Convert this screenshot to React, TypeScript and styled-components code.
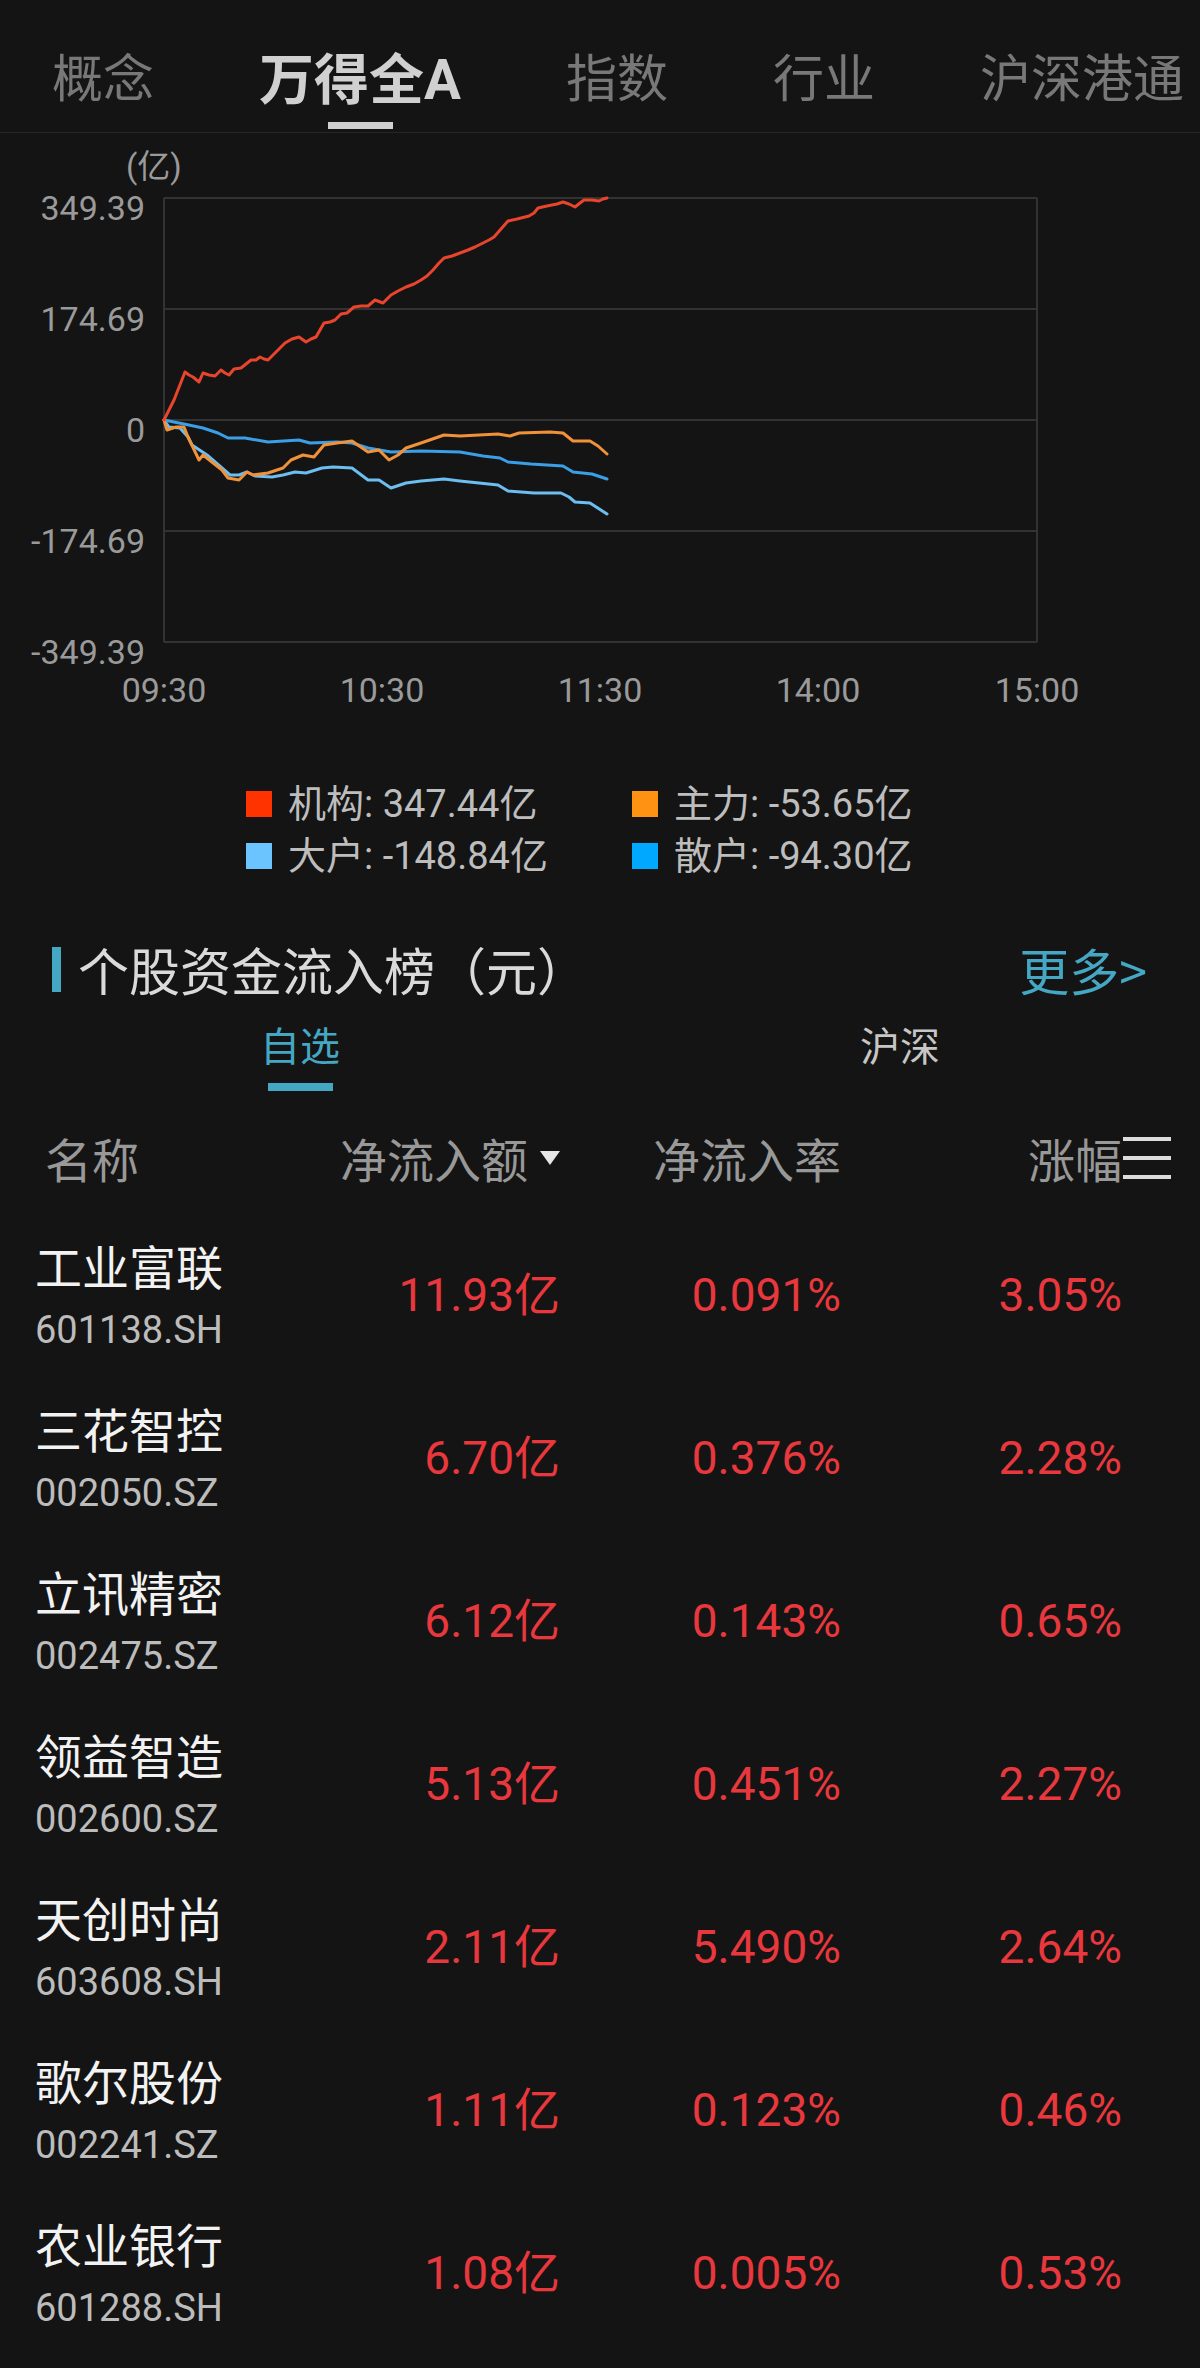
import React from "react";
import styled, { createGlobalStyle } from "styled-components";

const GlobalStyle = createGlobalStyle`
  html, body {
    margin: 0;
    padding: 0;
    background: #141414;
  }
  body {
    font-family: Roboto, "Noto Sans CJK SC", sans-serif;
  }
  * { box-sizing: border-box; }
`;

const TEAL = "#44a7c4";
const RED = "#e8383d";
const CJK = `"Noto Sans CJK SC", sans-serif`;
const NUM = `Roboto, "Noto Sans CJK SC", sans-serif`;

const Page = styled.div`
  width: 1200px;
  min-height: 2368px;
  background: #141414;
  overflow: hidden;
`;

/* ---------- top tabs ---------- */
const TabBar = styled.nav`
  display: flex;
  align-items: flex-start;
  gap: 105px;
  height: 133px;
  padding: 50px 0 0 52px;
  border-bottom: 1px solid #262626;
  white-space: nowrap;
  overflow: hidden;
`;

const Tab = styled.div<{ $active?: boolean }>`
  display: flex;
  flex-direction: column;
  align-items: center;
  font-family: ${NUM};
  font-size: ${(p) => (p.$active ? 55 : 51)}px;
  font-weight: ${(p) => (p.$active ? 700 : 400)};
  line-height: 60px;
  color: ${(p) => (p.$active ? "#d0d0d0" : "#787878")};
`;

const TabUnderline = styled.span`
  width: 65px;
  height: 7px;
  margin-top: 12px;
  background: #cfcfcf;
`;

/* ---------- chart ---------- */
const ChartBox = styled.section`
  height: 607px;
`;

const ChartSvg = styled.svg`
  display: block;
  width: 1200px;
  height: 607px;
`;

/* ---------- legend ---------- */
const Legend = styled.div`
  display: grid;
  grid-template-columns: 386px auto;
  grid-auto-rows: 52px;
  margin: 38px 0 0 246px;
`;

const LegendItem = styled.div`
  display: flex;
  align-items: center;
  gap: 16px;
  font-family: ${NUM};
  font-size: 38px;
  line-height: 52px;
  color: #bdbdbd;
  white-space: nowrap;
`;

const Swatch = styled.span<{ $color: string }>`
  flex: none;
  width: 26px;
  height: 26px;
  background: ${(p) => p.$color};
`;

/* ---------- section header ---------- */
const SectionHeader = styled.div`
  display: flex;
  align-items: center;
  justify-content: space-between;
  height: 60px;
  margin-top: 57px;
  padding: 0 53px 0 52px;
`;

const TitleGroup = styled.div`
  display: flex;
  align-items: center;
  gap: 17px;
`;

const TitleBar = styled.span`
  width: 9px;
  height: 45px;
  background: ${TEAL};
`;

const Title = styled.h2`
  margin: 0;
  font-family: ${CJK};
  font-size: 51px;
  font-weight: 400;
  line-height: 60px;
  color: #dadada;
`;

const MoreLink = styled.a`
  font-family: ${CJK};
  font-size: 50px;
  line-height: 60px;
  color: ${TEAL};
  text-decoration: none;
`;

/* ---------- sub tabs ---------- */
const SubTabs = styled.div`
  display: grid;
  grid-template-columns: 1fr 1fr;
  align-items: start;
  padding-top: 17px;
`;

const SubTab = styled.div<{ $active?: boolean }>`
  display: flex;
  flex-direction: column;
  align-items: center;
  font-family: ${CJK};
  font-size: 40px;
  line-height: 56px;
  color: ${(p) => (p.$active ? TEAL : "#c6c6c6")};
`;

const SubUnderline = styled.span`
  width: 65px;
  height: 8px;
  margin-top: 11px;
  background: ${TEAL};
`;

/* ---------- table ---------- */
const COLS = "300px 225px 281px 281px 1fr";

const TableHead = styled.div`
  display: grid;
  grid-template-columns: ${COLS};
  align-items: center;
  margin-top: 37px;
  padding: 0 0 17px 35px;
`;

const HeadCell = styled.div<{ $align?: "left" | "right"; $inset?: number }>`
  display: flex;
  align-items: center;
  justify-content: ${(p) => (p.$align === "left" ? "flex-start" : "flex-end")};
  padding-left: ${(p) => p.$inset ?? 0}px;
  font-family: ${CJK};
  font-size: 47px;
  line-height: 60px;
  color: #989898;
  white-space: nowrap;
`;

const SortArrow = styled.svg`
  margin-left: 12px;
  flex: none;
`;

const MenuIcon = styled.svg`
  display: block;
  margin-left: 1px;
`;

const Row = styled.div`
  display: grid;
  grid-template-columns: ${COLS};
  align-items: center;
  padding: 32px 0 1px 35px;
`;

const NameCell = styled.div`
  display: flex;
  flex-direction: column;
`;

const Name = styled.div`
  font-family: ${CJK};
  font-size: 47px;
  line-height: 56px;
  color: #f2f2f2;
  white-space: nowrap;
`;

const Code = styled.div`
  font-family: Roboto, sans-serif;
  font-size: 38px;
  line-height: 74px;
  color: #bcbcbc;
`;

const Value = styled.div`
  margin-bottom: 14px;
  text-align: right;
  font-family: ${NUM};
  font-size: 46px;
  line-height: 60px;
  color: ${RED};
  white-space: nowrap;
`;

/* ---------- data ---------- */
const tabs = ["概念", "万得全A", "指数", "行业", "沪深港通"];

type Series = { color: string; pts: string };

const series: Series[] = [
  {
    color: "#6cbdf0",
    pts: "164,420 169,427 180,428 188,437 192,445 207,455 222,468 230,475 239,475 247,472 255,476 272,477 283,475 295,472 306,473 322,468 333,467 352,468 368,480 379,480 391,488 406,483 421,481 444,479 460,481 498,485 508,491 534,493 561,493 569,497 575,502 590,503 607,514",
  },
  {
    color: "#3a9fe6",
    pts: "164,420 184,424 203,428 218,433 228,438 245,438 268,442 299,440 310,443 337,442 352,443 368,448 391,452 421,451 460,452 483,456 500,458 508,462 531,464 563,466 573,472 592,474 607,479",
  },
  {
    color: "#f0923a",
    pts: "164,420 167,430 176,427 184,427 188,437 199,460 203,455 222,470 228,478 239,480 247,472 253,475 268,473 283,468 291,460 303,455 314,457 324,445 337,443 352,441 368,452 379,450 389,460 398,455 406,448 421,443 444,435 460,436 498,434 510,436 519,433 550,432 563,433 573,441 590,441 598,446 607,454",
  },
  {
    color: "#e8452c",
    pts: "164,420 174,400 185,372 189,375 193,377 199,382 203,373 209,375 215,376 221,370 225,373 229,375 234,369 241,368 246,364 251,360 256,360 260,357 264,359 268,360 276,352 285,343 292,339 299,337 306,342 311,339 316,337 324,323 330,322 335,320 341,314 347,313 354,307 361,306 368,306 375,300 383,303 391,295 398,291 406,287 414,284 421,280 427,276 433,270 439,263 444,258 452,256 460,253 468,250 475,247 483,243 489,240 494,237 501,229 508,221 517,219 529,216 534,213 538,208 547,206 557,204 563,202 569,204 575,207 580,203 584,200 592,200 599,201 603,199 607,198",
  },
];

const yTicks = [
  { y: 198, label: "349.39" },
  { y: 309, label: "174.69" },
  { y: 420, label: "0" },
  { y: 531, label: "-174.69" },
  { y: 642, label: "-349.39" },
];

const xTicks = [
  { x: 164, label: "09:30" },
  { x: 382, label: "10:30" },
  { x: 600, label: "11:30" },
  { x: 818, label: "14:00" },
  { x: 1037, label: "15:00" },
];

const legend = [
  { color: "#ff3300", text: "机构: 347.44亿" },
  { color: "#ff9212", text: "主力: -53.65亿" },
  { color: "#6cc4ff", text: "大户: -148.84亿" },
  { color: "#00a8ff", text: "散户: -94.30亿" },
];

const rows = [
  { name: "工业富联", code: "601138.SH", amt: "11.93亿", rate: "0.091%", chg: "3.05%" },
  { name: "三花智控", code: "002050.SZ", amt: "6.70亿", rate: "0.376%", chg: "2.28%" },
  { name: "立讯精密", code: "002475.SZ", amt: "6.12亿", rate: "0.143%", chg: "0.65%" },
  { name: "领益智造", code: "002600.SZ", amt: "5.13亿", rate: "0.451%", chg: "2.27%" },
  { name: "天创时尚", code: "603608.SH", amt: "2.11亿", rate: "5.490%", chg: "2.64%" },
  { name: "歌尔股份", code: "002241.SZ", amt: "1.11亿", rate: "0.123%", chg: "0.46%" },
  { name: "农业银行", code: "601288.SH", amt: "1.08亿", rate: "0.005%", chg: "0.53%" },
];

function FlowChart() {
  const gridColor = "#333333";
  const labelColor = "#9a9a9a";
  return (
    <ChartBox>
      <ChartSvg viewBox="0 133 1200 607" xmlns="http://www.w3.org/2000/svg">
        <text x={126} y={178} fontSize={33} fill={labelColor} fontFamily={NUM}>
          (亿)
        </text>
        {yTicks.map((t) => (
          <g key={t.label}>
            <line x1={164} x2={1037} y1={t.y} y2={t.y} stroke={gridColor} strokeWidth={2} />
            <text
              x={145}
              y={t.y + 22}
              fontSize={34}
              fill={labelColor}
              textAnchor="end"
              fontFamily="Roboto, sans-serif"
            >
              {t.label}
            </text>
          </g>
        ))}
        <line x1={164} x2={164} y1={198} y2={642} stroke={gridColor} strokeWidth={2} />
        <line x1={1037} x2={1037} y1={198} y2={642} stroke={gridColor} strokeWidth={2} />
        {xTicks.map((t) => (
          <text
            key={t.label}
            x={t.x}
            y={702}
            fontSize={34}
            fill={labelColor}
            textAnchor="middle"
            fontFamily="Roboto, sans-serif"
          >
            {t.label}
          </text>
        ))}
        {series.map((s) => (
          <polyline
            key={s.color}
            points={s.pts}
            fill="none"
            stroke={s.color}
            strokeWidth={3}
            strokeLinejoin="round"
            strokeLinecap="round"
          />
        ))}
      </ChartSvg>
    </ChartBox>
  );
}

export default function App() {
  return (
    <Page>
      <GlobalStyle />
      <TabBar>
        {tabs.map((t) => (
          <Tab key={t} $active={t === "万得全A"}>
            {t}
            {t === "万得全A" && <TabUnderline />}
          </Tab>
        ))}
      </TabBar>

      <FlowChart />

      <Legend>
        {legend.map((l) => (
          <LegendItem key={l.text}>
            <Swatch $color={l.color} />
            {l.text}
          </LegendItem>
        ))}
      </Legend>

      <SectionHeader>
        <TitleGroup>
          <TitleBar />
          <Title>个股资金流入榜（元）</Title>
        </TitleGroup>
        <MoreLink href="#">更多&gt;</MoreLink>
      </SectionHeader>

      <SubTabs>
        <SubTab $active>
          自选
          <SubUnderline />
        </SubTab>
        <SubTab>沪深</SubTab>
      </SubTabs>

      <TableHead>
        <HeadCell $align="left" $inset={10}>
          名称
        </HeadCell>
        <HeadCell>
          净流入额
          <SortArrow width="20" height="14" viewBox="0 0 20 14">
            <polygon points="0,0 20,0 10,14" fill="#e6e6e6" />
          </SortArrow>
        </HeadCell>
        <HeadCell>净流入率</HeadCell>
        <HeadCell>涨幅</HeadCell>
        <HeadCell $align="left">
          <MenuIcon width="48" height="44" viewBox="0 0 48 44">
            <rect x="0" y="1" width="48" height="4" fill="#dcdcdc" />
            <rect x="0" y="20" width="48" height="4" fill="#dcdcdc" />
            <rect x="0" y="39" width="48" height="4" fill="#dcdcdc" />
          </MenuIcon>
        </HeadCell>
      </TableHead>

      {rows.map((r) => (
        <Row key={r.code}>
          <NameCell>
            <Name>{r.name}</Name>
            <Code>{r.code}</Code>
          </NameCell>
          <Value>{r.amt}</Value>
          <Value>{r.rate}</Value>
          <Value>{r.chg}</Value>
        </Row>
      ))}
    </Page>
  );
}
